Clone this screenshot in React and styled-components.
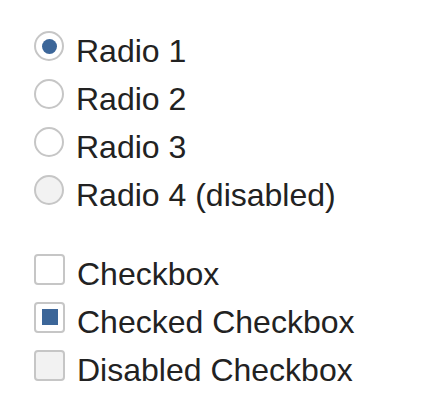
import React from "react";
import styled, { createGlobalStyle } from "styled-components";

const GlobalStyle = createGlobalStyle`
  body {
    margin: 0;
    background: #fff;
    font-family: "Liberation Sans", Arial, sans-serif;
  }
`;

const Page = styled.div`
  padding: 22px 0 0 34px;
  display: flex;
  flex-direction: column;
`;

const Group = styled.div`
  display: flex;
  flex-direction: column;
  & + & {
    margin-top: 31px;
  }
`;

const Row = styled.label`
  display: flex;
  align-items: center;
  gap: 12px;
  height: 48px;
  font-size: 32px;
  color: #222;
  white-space: nowrap;
`;

// label text sits a little below the control's centre
const Text = styled.span`
  padding-top: 11px;
`;

const RadioMark = styled.span`
  box-sizing: border-box;
  width: 30px;
  height: 30px;
  border-radius: 50%;
  border: 2px solid #c6c6c6;
  background: ${(props) => (props.disabled ? "#f2f2f2" : "#fff")};
  display: flex;
  align-items: center;
  justify-content: center;
  flex-shrink: 0;
  &::after {
    content: "";
    width: 15px;
    height: 15px;
    border-radius: 50%;
    background: #3c6699;
    display: ${(props) => (props.checked ? "block" : "none")};
  }
`;

const CheckMark = styled.span`
  box-sizing: border-box;
  width: 31px;
  height: 31px;
  border-radius: 4px;
  border: 2px solid #c6c6c6;
  background: ${(props) => (props.disabled ? "#f2f2f2" : "#fff")};
  display: flex;
  align-items: center;
  justify-content: center;
  flex-shrink: 0;
  &::after {
    content: "";
    width: 16px;
    height: 16px;
    background: #3c6699;
    display: ${(props) => (props.checked ? "block" : "none")};
  }
`;

const radios = [
  { label: "Radio 1", checked: true },
  { label: "Radio 2" },
  { label: "Radio 3" },
  { label: "Radio 4 (disabled)", disabled: true },
];

const checks = [
  { label: "Checkbox" },
  { label: "Checked Checkbox", checked: true },
  { label: "Disabled Checkbox", disabled: true },
];

const App = () => {
  return (
    <>
      <GlobalStyle />
      <Page>
        <Group>
          {radios.map((r) => (
            <Row key={r.label}>
              <RadioMark checked={r.checked} disabled={r.disabled} />
              <Text>{r.label}</Text>
            </Row>
          ))}
        </Group>
        <Group>
          {checks.map((c) => (
            <Row key={c.label}>
              <CheckMark checked={c.checked} disabled={c.disabled} />
              <Text>{c.label}</Text>
            </Row>
          ))}
        </Group>
      </Page>
    </>
  );
};

export default App;
